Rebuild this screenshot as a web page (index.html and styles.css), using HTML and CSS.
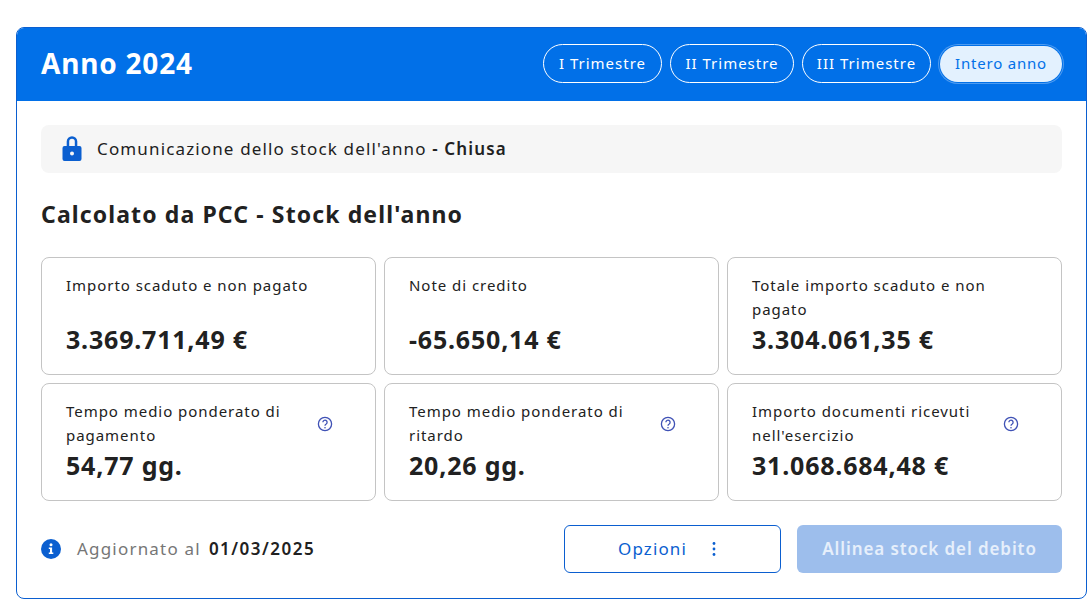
FILE: index.html
```html
<!DOCTYPE html>
<html lang="it">
<head>
<meta charset="utf-8">
<title>Anno 2024</title>
<link rel="stylesheet" href="styles.css">
</head>
<body>
<main class="card">
  <header class="card-head">
    <h1 class="year">Anno 2024</h1>
    <nav class="pills">
      <button class="pill pill-1">I Trimestre</button>
      <button class="pill pill-2">II Trimestre</button>
      <button class="pill pill-3">III Trimestre</button>
      <button class="pill pill-active">Intero anno</button>
    </nav>
  </header>
  <div class="card-body">
    <div class="notice">
      <svg class="lock" viewBox="0 0 20 26" width="20" height="26"><path fill="#0b5fd0" fill-rule="evenodd" d="M4.700 10V5.500a5.300 5.300 0 0 1 10.600 0V10h2.200a2 2 0 0 1 2 2v11a2 2 0 0 1-2 2h-15a2 2 0 0 1-2-2V12a2 2 0 0 1 2-2zm2.500 0h5.600V5.500a2.800 2.800 0 0 0-5.600 0zM10 15.500a2 2 0 1 0 0 4 2 2 0 0 0 0-4z"/></svg>
      <span class="notice-text">Comunicazione dello stock dell'anno <b>- Chiusa</b></span>
    </div>
    <h2 class="section">Calcolato da PCC - Stock dell'anno</h2>
    <section class="grid">
      <article class="tile">
        <div class="tile-top"><p class="label">Importo scaduto e non pagato</p></div>
        <p class="value">3.369.711,49 €</p>
      </article>
      <article class="tile">
        <div class="tile-top"><p class="label">Note di credito</p></div>
        <p class="value">-65.650,14 €</p>
      </article>
      <article class="tile">
        <div class="tile-top"><p class="label">Totale importo scaduto e non pagato</p></div>
        <p class="value">3.304.061,35 €</p>
      </article>
      <article class="tile">
        <div class="tile-top"><p class="label">Tempo medio ponderato di pagamento</p>
          <svg class="help" viewBox="0 0 16 16" width="16" height="16"><circle cx="8" cy="8" r="6.600" fill="none" stroke="#3f51b5" stroke-width="1.300"/><path d="M5.900 6.300a2.100 2.100 0 1 1 3.300 1.700c-.8.500-1.200.9-1.200 1.700" fill="none" stroke="#3f51b5" stroke-width="1.300"/><circle cx="8" cy="11.700" r=".8" fill="#3f51b5"/></svg></div>
        <p class="value">54,77 gg.</p>
      </article>
      <article class="tile">
        <div class="tile-top"><p class="label">Tempo medio ponderato di ritardo</p>
          <svg class="help" viewBox="0 0 16 16" width="16" height="16"><circle cx="8" cy="8" r="6.600" fill="none" stroke="#3f51b5" stroke-width="1.300"/><path d="M5.900 6.300a2.100 2.100 0 1 1 3.300 1.700c-.8.500-1.200.9-1.200 1.700" fill="none" stroke="#3f51b5" stroke-width="1.300"/><circle cx="8" cy="11.700" r=".8" fill="#3f51b5"/></svg></div>
        <p class="value">20,26 gg.</p>
      </article>
      <article class="tile">
        <div class="tile-top"><p class="label">Importo documenti ricevuti nell'esercizio</p>
          <svg class="help" viewBox="0 0 16 16" width="16" height="16"><circle cx="8" cy="8" r="6.600" fill="none" stroke="#3f51b5" stroke-width="1.300"/><path d="M5.900 6.300a2.100 2.100 0 1 1 3.300 1.700c-.8.500-1.200.9-1.200 1.700" fill="none" stroke="#3f51b5" stroke-width="1.300"/><circle cx="8" cy="11.700" r=".8" fill="#3f51b5"/></svg></div>
        <p class="value">31.068.684,48 €</p>
      </article>
    </section>
    <footer class="foot">
      <div class="updated">
        <svg class="info" viewBox="0 0 20 20" width="20" height="20"><circle cx="10" cy="10" r="10" fill="#0b5fd0"/><circle cx="10" cy="5.800" r="1.500" fill="#fff"/><path d="M7.800 8.500h3.300v5h1.200v1.500H7.800v-1.500h1.200v-3.500H7.800z" fill="#fff"/></svg>
        <span class="updated-label">Aggiornato al</span>
        <b class="updated-date">01/03/2025</b>
      </div>
      <div class="actions">
        <button class="btn-options"><span class="btn-options-text">Opzioni</span>
          <svg class="dots" viewBox="0 0 4 16" width="4" height="16"><circle cx="2" cy="2.500" r="1.400" fill="#0b5fd0"/><circle cx="2" cy="8" r="1.400" fill="#0b5fd0"/><circle cx="2" cy="13.500" r="1.400" fill="#0b5fd0"/></svg>
        </button>
        <button class="btn-align">Allinea stock del debito</button>
      </div>
    </footer>
  </div>
</main>
</body>
</html>
```
FILE: styles.css
```css
* { box-sizing: border-box; }
html, body { margin: 0; padding: 0; background: #fff; }
body {
  padding: 27px 3px 0 16px;
  font-family: "Noto Sans", "Open Sans", sans-serif;
  color: #212121;
  overflow: hidden;
}
p, h1, h2 { margin: 0; }
button { font-family: inherit; cursor: pointer; }
.card {
  width: 1071px;
  height: 572px;
  border: 1px solid #0b5fd0;
  border-radius: 8px;
  overflow: hidden;
}
.card-head {
  height: 74px;
  margin: -1px -1px 0;
  background: #0170e8;
  display: flex;
  align-items: center;
  justify-content: space-between;
  padding: 0 25px 1px 25px;
}
.year {
  margin-bottom: 1px;
  font-size: 28px;
  line-height: 36px;
  font-weight: 700;
  color: #fff;
  letter-spacing: 0.8px;
}
.pills { display: flex; gap: 8px; align-items: flex-start; }
.pill {
  height: 39px;
  padding: 0 0 2px;
  border: 1px solid #fff;
  border-radius: 20px;
  background: transparent;
  color: #fff;
  font-size: 15px;
  font-weight: 400;
  letter-spacing: 1px;
  display: flex;
  align-items: center;
  justify-content: center;
}
.pill-1 { width: 119px; }
.pill-2 { width: 124px; }
.pill-3 { width: 129px; }
.pill-active {
  width: 122px;
  height: 36px;
  margin: 2px 0 0 1px;
  background: #e3f1fe;
  color: #0170e8;
  letter-spacing: 0.8px;
  border: 0;
  box-shadow: 0 0 0 1px #0170e8, 0 0 0 2px #4d9bf0;
}
.card-body { padding: 24px 24px 0; }
.notice {
  height: 48px;
  background: #f6f6f6;
  border-radius: 8px;
  display: flex;
  align-items: center;
  gap: 15px;
  padding-left: 21px;
}
.lock { flex: none; }
.notice-text { margin-bottom: 2px; font-size: 17px; letter-spacing: 1.14px; }
.notice-text b { font-weight: 600; }
.section {
  margin-top: 25px;
  font-size: 23px;
  line-height: 32px;
  font-weight: 700;
  letter-spacing: 1.12px;
}
.grid {
  margin-top: 27px;
  display: grid;
  grid-template-columns: repeat(3, 335px);
  grid-auto-rows: 118px;
  gap: 8px;
}
.tile {
  border: 1px solid #c4c4c4;
  border-radius: 8px;
  padding: 16px 24px 0;
  display: flex;
  flex-direction: column;
}
.tile-top {
  height: 48px;
  display: flex;
  align-items: center;
  gap: 16px;
}
.label {
  flex: 1;
  align-self: flex-start;
  margin-top: -1px;
  font-size: 15px;
  line-height: 24px;
  letter-spacing: 0.96px;
}
.help { flex: none; margin-right: 18px; }
.value {
  margin-top: 1px;
  font-size: 25px;
  line-height: 32px;
  font-weight: 700;
  letter-spacing: 0.8px;
}
.foot {
  margin-top: 24px;
  display: flex;
  align-items: center;
  justify-content: space-between;
  height: 48px;
}
.updated { display: flex; align-items: center; }
.info { flex: none; }
.updated-label { margin: 0 0 2px 16px; color: #767676; font-size: 17px; letter-spacing: 1.2px; }
.updated-date { margin: 0 0 2px 8px; font-size: 17px; font-weight: 600; letter-spacing: 1.5px; }
.actions { display: flex; gap: 16px; }
.btn-options {
  width: 217px;
  height: 48px;
  padding: 0 11px 0 0;
  background: #fff;
  border: 1px solid #0b5fd0;
  border-radius: 6px;
  color: #0b5fd0;
  font-size: 17px;
  font-weight: 400;
  letter-spacing: 1.1px;
  display: flex;
  align-items: center;
  justify-content: center;
  gap: 25px;
}
.btn-options-text { margin-bottom: 1px; }
.dots { flex: none; }
.btn-align {
  width: 265px;
  height: 48px;
  padding: 0 0 1px;
  border: 0;
  border-radius: 6px;
  background: #9dbeec;
  color: #e6effb;
  font-size: 17px;
  font-weight: 600;
  letter-spacing: 0.9px;
}
```
